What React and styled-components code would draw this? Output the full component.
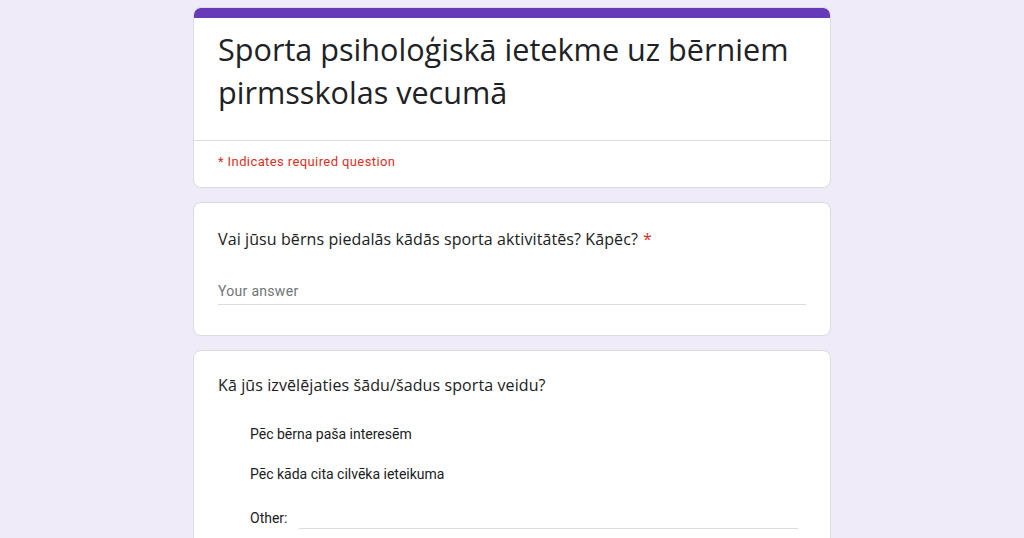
import React from 'react';
import styled, { createGlobalStyle } from 'styled-components';

const GlobalStyle = createGlobalStyle`
  html, body {
    margin: 0;
    padding: 0;
    background: #efebf8;
    height: 538px;
    overflow: hidden;
  }
  body {
    font-family: Roboto, "Open Sans", Arial, sans-serif;
    color: #202124;
  }
`;

const Page = styled.div`
  width: 638px;
  margin: 0 auto;
  padding-top: 7px;
  display: flex;
  flex-direction: column;
  gap: 14px;
`;

const Card = styled.div`
  background: #fff;
  border: 1px solid #dadce0;
  border-radius: 8px;
  overflow: hidden;
  box-sizing: border-box;
`;

const TopBar = styled.div`
  height: 10px;
  background: #673ab7;
`;

const Header = styled.div`
  padding: 10px 24px 26px 24px;
  border-bottom: 1px solid #dadce0;
`;

const Title = styled.h1`
  margin: 0;
  font-family: "Open Sans", Roboto, sans-serif;
  font-weight: 400;
  font-size: 30.6px;
  line-height: 43px;
  color: #202124;
`;

const Required = styled.div`
  padding: 12px 24px 17px;
  font-size: 13px;
  line-height: 17px;
  color: #d93025;
  letter-spacing: 0.4px;
`;

const Body = styled.div`
  padding: ${p => p.$top || 24}px 24px ${p => p.$bottom || 30}px;
`;

const Question = styled.div`
  font-family: "Open Sans", Roboto, sans-serif;
  font-size: 16px;
  line-height: 24px;
  letter-spacing: 0.1px;
  color: #202124;
`;

const Star = styled.span`
  color: #d93025;
  margin-left: 5px;
`;

const AnswerField = styled.div`
  margin-top: 30px;
  width: 588px;
  padding-bottom: 3px;
  border-bottom: 1px solid #dadce0;
  font-size: 14px;
  line-height: 20px;
  letter-spacing: 0.3px;
  color: #70757a;
`;

const Options = styled.div`
  margin-top: 27px;
  padding-left: 32px;
  display: flex;
  flex-direction: column;
  gap: 20px;
`;

const Option = styled.div`
  display: flex;
  align-items: flex-end;
  margin-top: ${p => (p.$other ? 3 : 0)}px;
  font-size: 14px;
  line-height: 20px;
  color: #202124;
`;

const OtherLine = styled.div`
  flex: 1;
  margin-left: 12px;
  margin-right: 8px;
  height: 20px;
  border-bottom: 1px solid #dadce0;
  position: relative;
  top: 1px;
`;

export default function App() {
  return (
    <>
      <GlobalStyle />
      <Page>
        <Card>
          <TopBar />
          <Header>
            <Title>Sporta psiholoģiskā ietekme uz bērniem pirmsskolas vecumā</Title>
          </Header>
          <Required>* Indicates required question</Required>
        </Card>

        <Card>
          <Body>
            <Question>
              Vai jūsu bērns piedalās kādās sporta aktivitātēs? Kāpēc?<Star>*</Star>
            </Question>
            <AnswerField>Your answer</AnswerField>
          </Body>
        </Card>

        <Card>
          <Body $top={22} $bottom={40}>
            <Question>Kā jūs izvēlējaties šādu/šadus sporta veidu?</Question>
            <Options>
              <Option>Pēc bērna paša interesēm</Option>
              <Option>Pēc kāda cita cilvēka ieteikuma</Option>
              <Option $other>
                Other:
                <OtherLine />
              </Option>
            </Options>
          </Body>
        </Card>
      </Page>
    </>
  );
}
